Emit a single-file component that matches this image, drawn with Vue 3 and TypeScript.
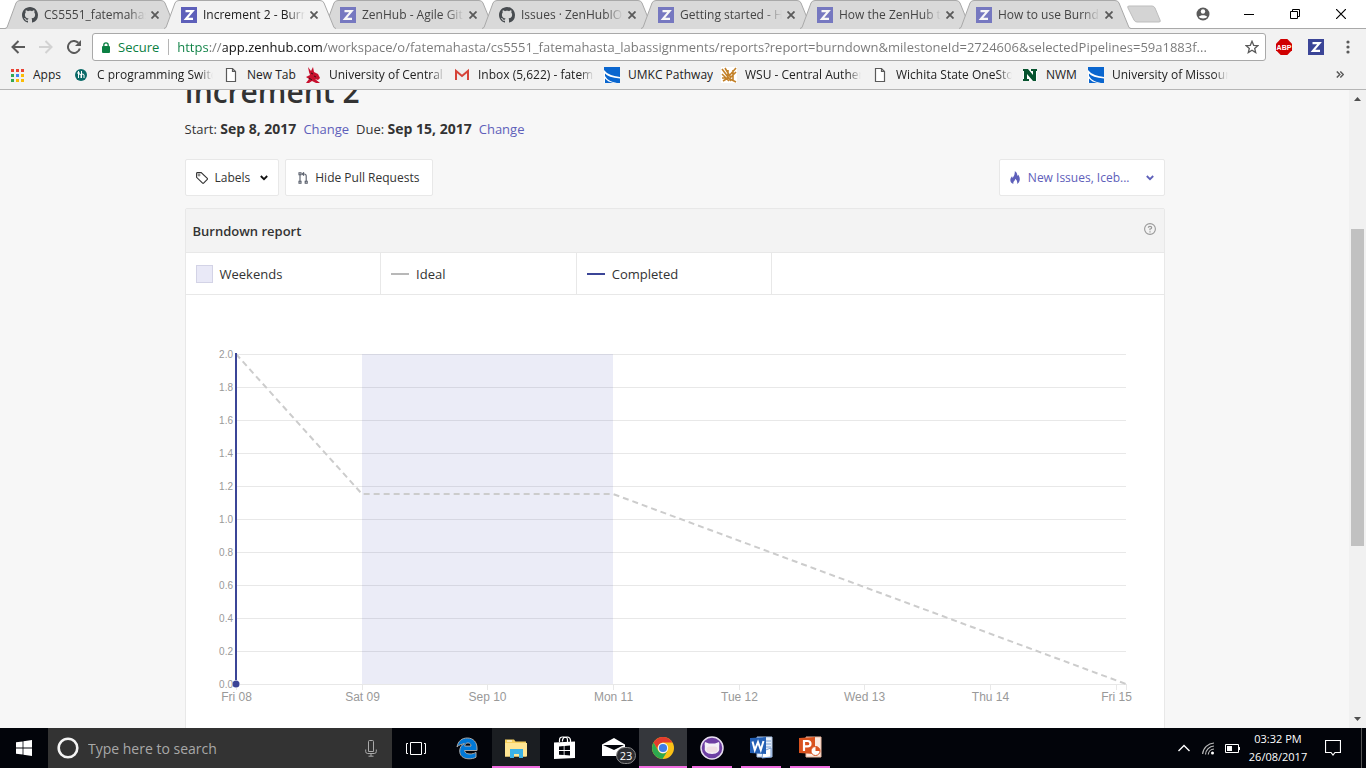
<script setup lang="ts">
import { ref } from 'vue'

interface Tab { title: string; icon: 'github' | 'zen'; active?: boolean }
interface Bookmark { label: string; icon: string; faded?: boolean }

const tabs: Tab[] = [
  { title: 'CS5551_fatemahas', icon: 'github' },
  { title: 'Increment 2 - Burn', icon: 'zen', active: true },
  { title: 'ZenHub - Agile Git', icon: 'zen' },
  { title: 'Issues · ZenHubIO/', icon: 'github' },
  { title: 'Getting started - H', icon: 'zen' },
  { title: 'How the ZenHub t', icon: 'zen' },
  { title: 'How to use Burnd', icon: 'zen' },
]

const bookmarks: Bookmark[] = [
  { label: 'Apps', icon: 'apps' },
  { label: 'C programming Switc', icon: 'c', faded: true },
  { label: 'New Tab', icon: 'page' },
  { label: 'University of Central M', icon: 'mule', faded: true },
  { label: 'Inbox (5,622) - fatema', icon: 'gmail', faded: true },
  { label: 'UMKC Pathway', icon: 'umkc' },
  { label: 'WSU - Central Authen', icon: 'wsu', faded: true },
  { label: 'Wichita State OneStop', icon: 'page', faded: true },
  { label: 'NWM', icon: 'nwm' },
  { label: 'University of Missouri', icon: 'umkc', faded: true },
]

const url = ref('https://app.zenhub.com/workspace/o/fatemahasta/cs5551_fatemahasta_labassignments/reports?report=burndown&milestoneId=2724606&selectedPipelines=59a1883f...')
const query = ref('')

const plot = { left: 50, right: 940, top: 59, bottom: 389 }
const yTicks = Array.from({ length: 11 }, (_, i) => {
  const value = 2 - i * 0.2
  return { label: value.toFixed(1), y: plot.top + i * 33 }
})
const xTicks = [
  { label: 'Fri 08', x: 50 },
  { label: 'Sat 09', x: 176 },
  { label: 'Sep 10', x: 301 },
  { label: 'Mon 11', x: 427 },
  { label: 'Tue 12', x: 553 },
  { label: 'Wed 13', x: 678 },
  { label: 'Thu 14', x: 804 },
  { label: 'Fri 15', x: 930 },
]

const apps = ['taskview', 'edge', 'explorer', 'store', 'mail', 'chrome', 'github', 'word', 'powerpoint']
const running = ['explorer', 'chrome', 'github', 'word', 'powerpoint']
const lit = ['explorer', 'chrome']
</script>

<template>
  <div class="screen">
    <header class="browser">
      <div class="strip">
        <div class="tabs">
          <div v-for="tab in tabs" :key="tab.title" class="tab" :class="{ active: tab.active }">
            <svg class="shape" viewBox="0 0 172 29" preserveAspectRatio="none" aria-hidden="true">
              <path d="M0 29 L2 27.500 L11 3 Q12 .5 15 .5 L156 .5 Q159 .5 160 3 L170 27.500 L172 29 Z" class="fill" />
              <path d="M0 28.500 L2 27.500 L11 3 Q12 .5 15 .5 L156 .5 Q159 .5 160 3 L170 27.500 L172 28.500" class="edge" />
            </svg>
            <svg v-if="tab.icon === 'zen'" class="fav" viewBox="0 0 16 16"><rect width="16" height="16" fill="#5e60ba" /><path d="M4.500 4.200h7L5 11.800h7" fill="none" stroke="#fff" stroke-width="2.200" /></svg>
            <svg v-else class="fav" viewBox="0 0 16 16"><path fill="#24292e" d="M8 0C3.580 0 0 3.580 0 8c0 3.540 2.290 6.530 5.470 7.590.4.070.55-.17.55-.38 0-.19-.01-.82-.01-1.490-2.010.37-2.530-.49-2.690-.94-.09-.23-.48-.94-.82-1.130-.28-.15-.68-.52-.01-.53.63-.01 1.080.58 1.230.82.72 1.210 1.870.87 2.330.66.07-.52.28-.87.51-1.070-1.780-.2-3.640-.89-3.640-3.950 0-.87.31-1.590.82-2.150-.08-.2-.36-1.020.08-2.120 0 0 .67-.21 2.200.82.64-.18 1.320-.27 2-.27s1.360.09 2 .27c1.530-1.040 2.200-.82 2.200-.82.44 1.100.16 1.920.08 2.120.51.56.82 1.270.82 2.150 0 3.070-1.870 3.750-3.650 3.950.29.25.54.73.54 1.480 0 1.070-.01 1.930-.01 2.200 0 .21.15.46.55.38A8.010 8.010 0 0 0 16 8c0-4.420-3.580-8-8-8z" /></svg>
            <span class="tab-title">{{ tab.title }}</span>
            <button class="close" aria-label="Close tab"><svg viewBox="0 0 8 8"><path d="M.5.5l7 7M7.500.5l-7 7" stroke="#5a5a5a" stroke-width="1.800" /></svg></button>
          </div>
          <button class="new-tab" aria-label="New tab"><svg viewBox="0 0 36 19"><path d="M3 1h23q2 0 3 2l5 12q1 2-1 2H11q-2 0-3-2L2 3q-1-2 1-2z" fill="#d4d4d4" stroke="#bdbdbd" /></svg></button>
        </div>
        <div class="window-buttons">
          <button aria-label="Profile"><svg width="14" height="14" viewBox="0 0 14 14"><circle cx="7" cy="7" r="6.500" fill="#5a5a5a" /><circle cx="7" cy="4.500" r="2.200" fill="#fff" /><path d="M2.800 9.800C4 7.600 10 7.600 11.200 9.800 10 12 4 12 2.800 9.800z" fill="#fff" /></svg></button>
          <button aria-label="Minimise"><svg width="10" height="10" viewBox="0 0 10 10"><path d="M0 5.500h10" stroke="#000" /></svg></button>
          <button aria-label="Restore"><svg width="10" height="10" viewBox="0 0 10 10"><path d="M.5 2.500h7v7h-7zM2.500 2.500v-2h7v7h-2" fill="none" stroke="#000" /></svg></button>
          <button aria-label="Close"><svg width="10" height="10" viewBox="0 0 10 10"><path d="M0 0l10 10M10 0L0 10" stroke="#000" stroke-width="1.200" /></svg></button>
        </div>
      </div>

      <div class="toolbar">
        <button aria-label="Back"><svg width="14" height="14" viewBox="0 0 14 14"><path d="M14 7H1.500M7.500 1l-6 6 6 6" fill="none" stroke="#5a5a5a" stroke-width="2" /></svg></button>
        <button aria-label="Forward"><svg width="14" height="14" viewBox="0 0 14 14"><path d="M0 7h12.500M6.500 1l6 6-6 6" fill="none" stroke="#d2d2d2" stroke-width="2" /></svg></button>
        <button aria-label="Reload"><svg width="14" height="14" viewBox="0 0 14 14"><path d="M12.800 8.500A6 6 0 1 1 11.300 2.800" fill="none" stroke="#5a5a5a" stroke-width="2" /><path d="M14 0v6H8z" fill="#5a5a5a" /></svg></button>
        <div class="omnibox">
          <svg width="8" height="11" viewBox="0 0 8 11"><rect y="4" width="8" height="7" rx="1" fill="#0b8043" /><path d="M1.800 4.500V3a2.200 2.200 0 0 1 4.400 0v1.500" fill="none" stroke="#0b8043" stroke-width="1.300" /></svg>
          <label for="address" class="secure">Secure</label>
          <input id="address" v-model="url" class="address" type="text" spellcheck="false" />
          <button class="star" aria-label="Bookmark this page"><svg width="14" height="14" viewBox="0 0 14 14"><path d="M7 1.300l1.700 4 4.200.3-3.200 2.800 1 4.200L7 10.300l-3.700 2.300 1-4.200L1.100 5.600l4.200-.3z" fill="none" stroke="#5a5a5a" stroke-width="1.300" /></svg></button>
        </div>
        <button aria-label="Adblock Plus"><svg width="16" height="16" viewBox="0 0 16 16"><path d="M4.700 0h6.600L16 4.700v6.600L11.300 16H4.700L0 11.300V4.700z" fill="#d00000" /><text x="8" y="10.500" text-anchor="middle" class="abp">ABP</text></svg></button>
        <button aria-label="ZenHub"><svg width="16" height="16" viewBox="0 0 16 16"><rect width="16" height="16" fill="#3b4597" /><path d="M4.500 4.200h7L5 11.800h7" fill="none" stroke="#fff" stroke-width="2.200" /></svg></button>
        <button aria-label="Menu"><svg width="4" height="14" viewBox="0 0 4 14" fill="#5a5a5a"><circle cx="2" cy="2" r="1.600" /><circle cx="2" cy="7" r="1.600" /><circle cx="2" cy="12" r="1.600" /></svg></button>
      </div>

      <nav class="bookmarks">
        <a v-for="mark in bookmarks" :key="mark.label" href="#" class="bookmark">
          <svg viewBox="0 0 16 16" aria-hidden="true">
            <g v-if="mark.icon === 'apps'">
              <path d="M2 2h3v3H2zM7 2h3v3H7zM12 2h3v3h-3z" fill="#ea4335" />
              <path d="M2 7h3v3H2z" fill="#34a853" /><path d="M7 7h3v3H7z" fill="#4285f4" /><path d="M12 7h3v3h-3zM7 12h3v3H7zM12 12h3v3h-3z" fill="#fbbc05" /><path d="M2 12h3v3H2z" fill="#34a853" />
            </g>
            <g v-else-if="mark.icon === 'c'"><circle cx="8" cy="8" r="6" fill="#0b6a68" /><path d="M5.500 4v7M5.500 7.500q2-1.500 2.500.5v3M8.500 4v7M8.500 7.500q2-1.500 2.500.5v3M4 6h3" fill="none" stroke="#fff" /></g>
            <g v-else-if="mark.icon === 'page'"><path d="M3.500 1.500h6l3 3v10h-9zM9.500 1.500v3h3" fill="#fff" stroke="#5a5a5a" stroke-width="1.200" /></g>
            <g v-else-if="mark.icon === 'mule'"><path d="M3 0l3 4 2-4 1 5 4 2 2 4-2 2-3-1 5 4h-4l-4-2-3 2H1l3-4-3-2 4-2-1-3z" fill="#c8102e" /><path d="M6 6l2 1M4 11l3 2M9 9l2 1" stroke="#3d1018" /></g>
            <g v-else-if="mark.icon === 'gmail'"><path d="M1 3h14v10H1z" fill="#eee" /><path d="M2 13V4l6 5 6-5v9" fill="none" stroke="#d64338" stroke-width="2" /></g>
            <g v-else-if="mark.icon === 'umkc'"><path d="M0 0h16v16H0z" fill="#0a66cf" /><path d="M0 3Q4 8.500 16 10v1.500Q4 10.500 1 6.500V9Q4 14.500 13 16H9.500Q4 15 1 11.500V16H0z" fill="#fff" /></g>
            <g v-else-if="mark.icon === 'wsu'"><path d="M0 0h16v16H0z" fill="#fff" /><path d="M1 2l9 12M4 1l6 10M1 7l7 7M15 1L8 9M15 5l-6 6M1 11h6M9 12l6 3M2 14l5-3M12 3v11M7 3v8" stroke="#c38129" stroke-width="1.600" /></g>
            <g v-else><path d="M1 2h14v12H1z" fill="#fff" /><path d="M1 2h5l5 6V4H9V2h6v2h-1v10h-3L5 7v5h2v2H1v-2h1V4H1z" fill="#07542f" /></g>
          </svg>
          <span :class="{ faded: mark.faded }">{{ mark.label }}</span>
        </a>
        <button class="more" aria-label="More bookmarks"><svg width="8" height="7" viewBox="0 0 8 7"><path d="M.8.5l3 3-3 3M4.300.5l3 3-3 3" fill="none" stroke="#5a5a5a" stroke-width="1.500" /></svg></button>
      </nav>
    </header>

    <div class="viewport">
      <main class="page">
        <div class="container">
          <h1>Increment 2</h1>
          <p class="dates">
            Start: <b>Sep 8, 2017</b><a href="#">Change</a>Due: <b>Sep 15, 2017</b><a href="#">Change</a>
          </p>
          <div class="filters">
            <button class="filter">
              <svg width="12" height="12" viewBox="0 0 12 12"><path d="M.6 1.500q0-.9.9-.9h3.700l6.100 5.800q.5.500 0 1L7.600 11.200q-.5.500-1 0L.6 5.300z" fill="none" stroke="#333" stroke-width="1.100" /><circle cx="3" cy="3" r="1" fill="none" stroke="#333" stroke-width=".7" /></svg>
              <span>Labels</span>
              <svg class="caret" width="8" height="6" viewBox="0 0 8 6"><path d="M.8 1l3.200 3.200L7.200 1" fill="none" stroke="#111" stroke-width="1.800" /></svg>
            </button>
            <button class="filter pulls">
              <svg width="10" height="12" viewBox="0 0 10 12" fill="none" stroke="#555b68" stroke-width="1.100"><path d="M1 .8h2v2H1zM1 9.200h2v2H1zM2 2.800v6.400M8.200 9.200V4q0-2-2-2H4.500M6 .3L4.300 2 6 3.700M7.200 9.200h2v2h-2z" /></svg>
              <span>Hide Pull Requests</span>
            </button>
            <button class="filter pipelines">
              <svg width="10" height="13" viewBox="0 0 10 13"><path d="M4.800 0Q8 2.200 7 5l1.300-1.200Q10.500 7 9.500 10 9 12 7 13 8 10 5.300 7.800 5 9.500 4 10.300 3 11.400 3.400 13 .3 12 .3 8.800.4 6.800 2 5.300L2.700 7Q5.200 4 4.800 0z" fill="#5e60ba" /></svg>
              <span>New Issues, Iceb...</span>
              <svg class="caret" width="8" height="6" viewBox="0 0 8 6"><path d="M.8 1l3.200 3.200L7.200 1" fill="none" stroke="#5e60ba" stroke-width="1.800" /></svg>
            </button>
          </div>

          <section class="card">
            <div class="card-head">
              <h2>Burndown report</h2>
              <button aria-label="Help"><svg width="12" height="12" viewBox="0 0 12 12"><circle cx="6" cy="6" r="5.400" fill="none" stroke="#999" stroke-width="1.100" /><path d="M4.300 4.800q0-1.500 1.700-1.500t1.700 1.400Q7.700 5.900 6 6v1.300M6 8.200v1.200" fill="none" stroke="#999" stroke-width="1.200" /></svg></button>
            </div>
            <ul class="legend">
              <li><i class="swatch"></i>Weekends</li>
              <li><i class="dash"></i>Ideal</li>
              <li><i class="dash completed"></i>Completed</li>
            </ul>
            <svg class="chart" viewBox="0 0 978 434" role="img" aria-label="Burndown chart">
              <g class="grid">
                <line v-for="t in yTicks" :key="t.label" :x1="plot.left" :x2="plot.right" :y1="t.y + 0.5" :y2="t.y + 0.5" />
                <line v-for="t in xTicks" :key="t.label" :x1="t.x + 0.5" :x2="t.x + 0.5" :y1="plot.bottom" :y2="plot.bottom + 6" />
                <line :x1="plot.right + 0.5" :x2="plot.right + 0.5" :y1="plot.bottom" :y2="plot.bottom + 6" />
              </g>
              <rect x="176" y="59" width="251" height="330" class="weekend" />
              <path d="M50 59L176 199H427L940 389" class="ideal" />
              <path d="M50 58V389" class="done" />
              <circle cx="50" cy="389" r="4" class="halo" />
              <circle cx="50" cy="389" r="3.500" class="dot" />
              <text v-for="t in yTicks" :key="t.label" x="47" :y="t.y + 4" text-anchor="end" class="y-label">{{ t.label }}</text>
              <text v-for="t in xTicks" :key="t.label" :x="t.x + 0.5" y="406" text-anchor="middle" class="x-label">{{ t.label }}</text>
            </svg>
          </section>
        </div>
      </main>
      <div class="scrollbar" aria-hidden="true">
        <svg width="7" height="4" viewBox="0 0 7 4"><path d="M0 4h7L3.500 0z" fill="#505050" /></svg>
        <div class="track"><div class="thumb"></div></div>
        <svg width="7" height="4" viewBox="0 0 7 4"><path d="M0 0h7L3.500 4z" fill="#505050" /></svg>
      </div>
    </div>

    <footer class="taskbar">
      <button class="start" aria-label="Start"><svg width="16" height="16" viewBox="0 0 16 16"><path d="M0 2.300l6.600-.9v6.200H0zM7.400 1.300L16 0v7.600H7.400zM0 8.400h6.600v6.200L0 13.700zM7.400 8.400H16V16l-8.600-1.200z" fill="#fff" /></svg></button>
      <div class="search">
        <svg width="22" height="22" viewBox="0 0 22 22"><circle cx="11" cy="11" r="9.300" fill="none" stroke="#f4f4f4" stroke-width="2.600" /></svg>
        <input v-model="query" type="text" placeholder="Type here to search" aria-label="Type here to search" />
        <svg width="12" height="17" viewBox="0 0 12 17"><path d="M3.500 1.500q0-1 1-1h3q1 0 1 1v10h-5zM.7 9.500v2q0 2 2 2h6.600q2 0 2-2v-2M6 13.500V16M3.500 16.200h5" fill="none" stroke="#aaa" /></svg>
      </div>
      <button v-for="app in apps" :key="app" class="app" :class="[app, { running: running.includes(app), lit: lit.includes(app) }]" :aria-label="app">
        <svg width="24" height="24" viewBox="0 0 24 24" aria-hidden="true">
          <g v-if="app === 'taskview'" fill="none" stroke="#fff"><path d="M6.500 6.500h11v12h-11zM4 7.500H2.500v10H4M20 7.500h1.500v10H20" /></g>
          <path v-else-if="app === 'edge'" d="M2 11C3 5 7 2 12.300 2 18.500 2 22 6.500 22 12v2.500H9.500c.3 2.500 2.500 3.500 5.500 3.500 2.300 0 4.200-.6 6-1.600v4.800c-2 1.200-4.600 1.600-7 1.600-6 0-9.300-3.300-9.300-7.700 0-3.400 1.700-6 4.700-7.500C6.500 8.300 3.700 8.900 2 11zm7.700-.9h6.300c0-2.100-1.100-3.200-3-3.200s-3 1.200-3.300 3.200z" fill="#0078d7" />
          <g v-else-if="app === 'explorer'"><path d="M1 3.500h9l1.500 2H22v15H1z" fill="#f5cf5e" /><path d="M1 7h22v13.500H1z" fill="#ffe694" /><path d="M3 5h5" stroke="#fff" /><path d="M6 22v-9h13v9h-4v-4h-5v4z" fill="#3bb2e6" /></g>
          <g v-else-if="app === 'store'"><path d="M1 6.500l21-1V22L1 23z" fill="#fff" /><path d="M6.500 6V4q0-3 3-3h1.500q3.500 0 3.500 3v2M9.500 5.500V4Q10 1 13 1h1.500Q17 1 17.500 4v2" fill="none" stroke="#fff" stroke-width="1.200" /><path d="M6 10.500l4.700-.5v4H6zM11.500 10l5.500-.6V14h-5.500zM6 15h4.700v4L6 18.700zM11.500 15H17v4.500l-5.500-.4z" fill="#02040a" /></g>
          <g v-else-if="app === 'mail'"><path d="M0 8.500L12 2l11 6.500V20H0z" fill="#fff" /><path d="M1 9h21l-10 5z" fill="#02040a" /></g>
          <g v-else-if="app === 'chrome'"><circle cx="12" cy="12" r="11" fill="#fbc116" /><path d="M2.500 6.500A11 11 0 0 1 21.500 6.500H12A5.500 5.500 0 0 0 7.200 14.800z" fill="#e33b2e" /><path d="M2.500 6.500A11 11 0 0 0 11.500 23L16.700 14.800A5.500 5.500 0 0 1 7.200 14.800z" fill="#2da94f" /><circle cx="12" cy="12" r="5.200" fill="#f5f5f5" /><circle cx="12" cy="12" r="4.100" fill="#3f7de8" /></g>
          <g v-else-if="app === 'github'"><circle cx="12" cy="12" r="11" fill="#6e3fa3" stroke="#e8dff0" stroke-width="1.500" /><path d="M5 6l4 1.500h6L19 6q.7 2 .2 4 1.300 8-7.200 8T4.800 10Q4.300 8 5 6z" fill="#f4f0f7" /><rect x="6.500" y="10.500" width="11" height="6" rx="3" fill="#f0dfe5" /></g>
          <g v-else-if="app === 'word'"><path d="M8 1h15v20H8z" fill="#e8f0fa" stroke="#aac3e6" /><path d="M17 5h5M17 8h5M17 11h5" stroke="#7ba0d6" /><path d="M14 15l8-3v9l-9 1z" fill="#fff" stroke="#7ba0d6" /><path d="M1 2l16-1v17L1 17z" fill="#2460b5" /><path d="M3.500 5.500l2.300 8.500L9 6l2.800 8 2.700-9" fill="none" stroke="#fff" stroke-width="2" /></g>
          <g v-else><path d="M8 1h15v20H8z" fill="#fbe9e0" stroke="#eab79e" /><path d="M1 2l16-1v17L1 17z" fill="#d9521e" /><path d="M6 15V5h3.500q3 0 3 2.700t-3 2.700H6" fill="none" stroke="#fff" stroke-width="2.200" /><circle cx="17.500" cy="15" r="4.500" fill="#fff" stroke="#d9521e" /><path d="M17.500 15v-4.500a4.500 4.500 0 0 1 4.500 4.500z" fill="#d9521e" /></g>
        </svg>
        <span v-if="app === 'mail'" class="badge">23</span>
      </button>
      <div class="tray">
        <button aria-label="Show hidden icons"><svg width="12" height="8" viewBox="0 0 12 8"><path d="M.5 7L6 1.500 11.500 7" fill="none" stroke="#fff" stroke-width="1.400" /></svg></button>
        <button aria-label="Wi-Fi"><svg width="12" height="13" viewBox="0 0 12 13" fill="none" stroke="#bbb" stroke-width="1.200"><path d="M.6 12A12 12 0 0 1 12 1M3.500 12.500A9 9 0 0 1 12 4M6.300 12.500A6 6 0 0 1 12 7" /><circle cx="10.500" cy="11" r="1.500" fill="#fff" stroke="none" /></svg></button>
        <button aria-label="Battery"><svg width="15" height="9" viewBox="0 0 15 9"><path d="M.5.5h13v8H.5z" fill="none" stroke="#fff" /><path d="M2 2h5v5H2zM14 3h1v3h-1z" fill="#fff" /></svg></button>
        <div class="clock"><span>03:32 PM</span><span>26/08/2017</span></div>
        <button aria-label="Notifications"><svg width="16" height="16" viewBox="0 0 16 16"><path d="M.5.5h15v12H10l-2 2.500-2-2.500H.5z" fill="none" stroke="#fff" stroke-width="1.200" /></svg></button>
        <div class="peek"></div>
      </div>
    </footer>
  </div>
</template>

<style>
body { margin: 0; overflow: hidden; }
</style>

<style scoped>
* { box-sizing: border-box; }
button { display: flex; align-items: center; justify-content: center; padding: 0; border: 0; background: none; font: inherit; color: inherit; }
input { padding: 0; border: 0; outline: 0; background: none; font: inherit; }
svg { display: block; flex: none; }
a { text-decoration: none; }

.screen { display: flex; flex-direction: column; height: 100vh; overflow: hidden; font-family: "Open Sans", "Noto Sans", sans-serif; font-size: 12px; color: #333; }

.strip { display: flex; justify-content: space-between; height: 29px; background: #fff; box-shadow: inset 0 -1px #a9a9a9; }
.tabs { display: flex; flex: 1; min-width: 0; padding-left: 5px; }
.tab { position: relative; display: flex; flex: 0 1 172px; align-items: center; min-width: 60px; margin-right: -13px; padding: 0 18px 0 17px; color: #444; }
.tab.active { z-index: 1; color: #222; }
.shape { position: absolute; inset: 0; width: 100%; height: 100%; }
.fill { fill: #d9d9d9; }
.edge { fill: none; stroke: #a9a9a9; }
.active .fill { fill: #f2f2f2; }
.fav { position: relative; width: 16px; height: 16px; opacity: .8; }
.active .fav { opacity: 1; }
.tab-title { position: relative; flex: 1; min-width: 0; margin: 0 5px 0 6px; overflow: hidden; white-space: nowrap; mask-image: linear-gradient(to left, transparent, #000 18px); }
.close { position: relative; width: 8px; height: 8px; }
.close svg { width: 8px; height: 8px; }
.new-tab { align-self: center; margin-left: 8px; width: 36px; }
.new-tab svg { width: 36px; height: 19px; }
.window-buttons { display: flex; flex: none; align-items: center; height: 27px; margin-right: 2px; }
.window-buttons button { width: 46px; height: 27px; }

.toolbar { display: flex; align-items: center; height: 35px; padding: 1px 2px 0 4px; background: #f2f2f2; }
.toolbar > button { width: 28px; height: 28px; }
.toolbar > button:nth-last-child(-n+3) { width: 32px; }
.omnibox { display: flex; flex: 1; align-items: center; height: 28px; min-width: 0; margin: 0 2px 0 4px; padding: 0 6px 0 9px; border: 1px solid #a9a9a9; border-radius: 3px; background: #fff; font-size: 13px; }
.secure { margin-left: 8px; padding-right: 9px; border-right: 1px solid #b5b5b5; line-height: 16px; color: #0b8043; }
.address { flex: 1; min-width: 0; margin-left: 8px; height: 24px; background: linear-gradient(90deg, #0b8043 32px, #777 32px 46px, #111 46px 145px, #777 145px); background-clip: text; -webkit-background-clip: text; color: transparent; caret-color: #222; text-overflow: ellipsis; }
.abp { font: bold 7px "Liberation Sans", sans-serif; fill: #fff; }

.bookmarks { display: grid; grid-template-columns: 64px 150px 82px 149px 150px 117px 151px 150px 66px 140px 1fr; align-items: center; height: 26px; padding: 0 22px 4px 9px; border-bottom: 1px solid #b5b5b5; background: #f2f2f2; }
.bookmark { display: flex; align-items: center; gap: 8px; color: #222; white-space: nowrap; }
.bookmark svg { width: 16px; height: 16px; }
.bookmark span { max-width: 116px; overflow: hidden; line-height: 17px; }
.bookmark .faded { mask-image: linear-gradient(to left, transparent, #000 14px); }
.more { justify-self: end; }

.viewport { display: flex; flex: 1; min-height: 0; background: #f7f7f7; }
.page { flex: 1; min-width: 0; overflow: hidden; }
.container { max-width: 980px; margin: -20px auto 0; }
h1 { margin: 0; font-size: 30px; line-height: 44px; font-weight: 600; color: #333; }
.dates { margin: 4px 0 19px; font-size: 13px; line-height: 22px; }
.dates b { font-size: 14px; line-height: 20px; }
.dates a { margin: 0 7px; color: #5e60ba; }
.filters { display: flex; gap: 6px; }
.filter { gap: 7px; height: 37px; padding: 0 10px; border: 1px solid #e8e8e8; border-radius: 2px; background: #fff; font-size: 12px; color: #333; }
.filter .caret { margin-left: 3px; }
.pulls { padding: 0 13px 0 12px; }
.pipelines { gap: 8px; margin-left: auto; color: #5e60ba; }
.pipelines .caret { margin-left: 8px; }
.card { margin-top: 12px; border: 1px solid #e8e8e8; border-radius: 2px 2px 0 0; background: #fff; }
.card-head { display: flex; align-items: center; justify-content: space-between; height: 44px; padding: 0 8px 0 7px; border-bottom: 1px solid #e8e8e8; background: #f3f3f3; }
.card-head button { padding-bottom: 4px; }
h2 { margin: 0; font-size: 13px; font-weight: 600; }
.legend { display: flex; height: 42px; margin: 0; padding: 0; border-bottom: 1px solid #e8e8e8; list-style: none; font-size: 13px; }
.legend li { display: flex; flex: 0 0 20%; align-items: center; padding-left: 10px; border-right: 1px solid #e8e8e8; }
.swatch { width: 17px; height: 18px; margin-right: 7px; border: 1px solid #d3d3e6; background: #e9e9f7; }
.dash { width: 18px; height: 2px; margin-right: 7px; background: #b8b8b8; }
.dash.completed { background: #3b4597; }
.chart { width: 100%; height: auto; }
.grid line { stroke: #e8e8e8; }
.weekend { fill: #5e60ba; fill-opacity: .12; }
.ideal { fill: none; stroke: #ccc; stroke-width: 2; stroke-dasharray: 6 4; }
.done { stroke: #3b4597; stroke-width: 2; }
.halo { fill: #fff; }
.dot { fill: #3b4597; }
.y-label { font: 10px "Liberation Sans", Arial, sans-serif; fill: #999; }
.x-label { font: 12px "Liberation Sans", Arial, sans-serif; fill: #999; }

.scrollbar { display: flex; flex: none; flex-direction: column; align-items: center; width: 17px; padding: 7px 0; background: #f1f1f1; }
.track { display: flex; flex: 1; width: 13px; padding: 128px 0 171px; }
.thumb { flex: 1; background: #c1c1c1; }

.taskbar { display: flex; flex: none; height: 40px; background: #02040a; color: #fff; }
.start { width: 48px; }
.search { display: flex; align-items: center; width: 344px; padding: 0 15px 0 9px; background: #333; }
.search input { flex: 1; min-width: 0; margin-left: 9px; font-size: 14px; color: #fff; }
.search input::placeholder { color: #a8a8a8; opacity: 1; }
.app { position: relative; width: 48px; margin-right: 1px; }
.app.taskview { margin-right: 3px; }
.lit { background: #1b1e22; }
.chrome.lit { background: #35373c; }
.running::after { content: ""; position: absolute; right: 4px; bottom: 0; left: 4px; height: 2px; background: #f06ce0; }
.lit::after { right: 0; left: 0; }
.badge { position: absolute; right: 2px; bottom: 4px; width: 20px; border: 1px solid #888; border-radius: 9px; background: #2c2d31; font-size: 11px; line-height: 15px; text-align: center; }
.tray { display: flex; align-items: center; margin-left: auto; }
.tray button { width: 24px; height: 40px; }
.clock { display: flex; flex-direction: column; width: 62px; margin-left: 3px; font-size: 11px; line-height: 18px; text-align: center; }
.clock + button { width: 42px; margin-right: 7px; margin-left: 3px; }
.peek { width: 5px; height: 40px; border-left: 1px solid #555; }
</style>
